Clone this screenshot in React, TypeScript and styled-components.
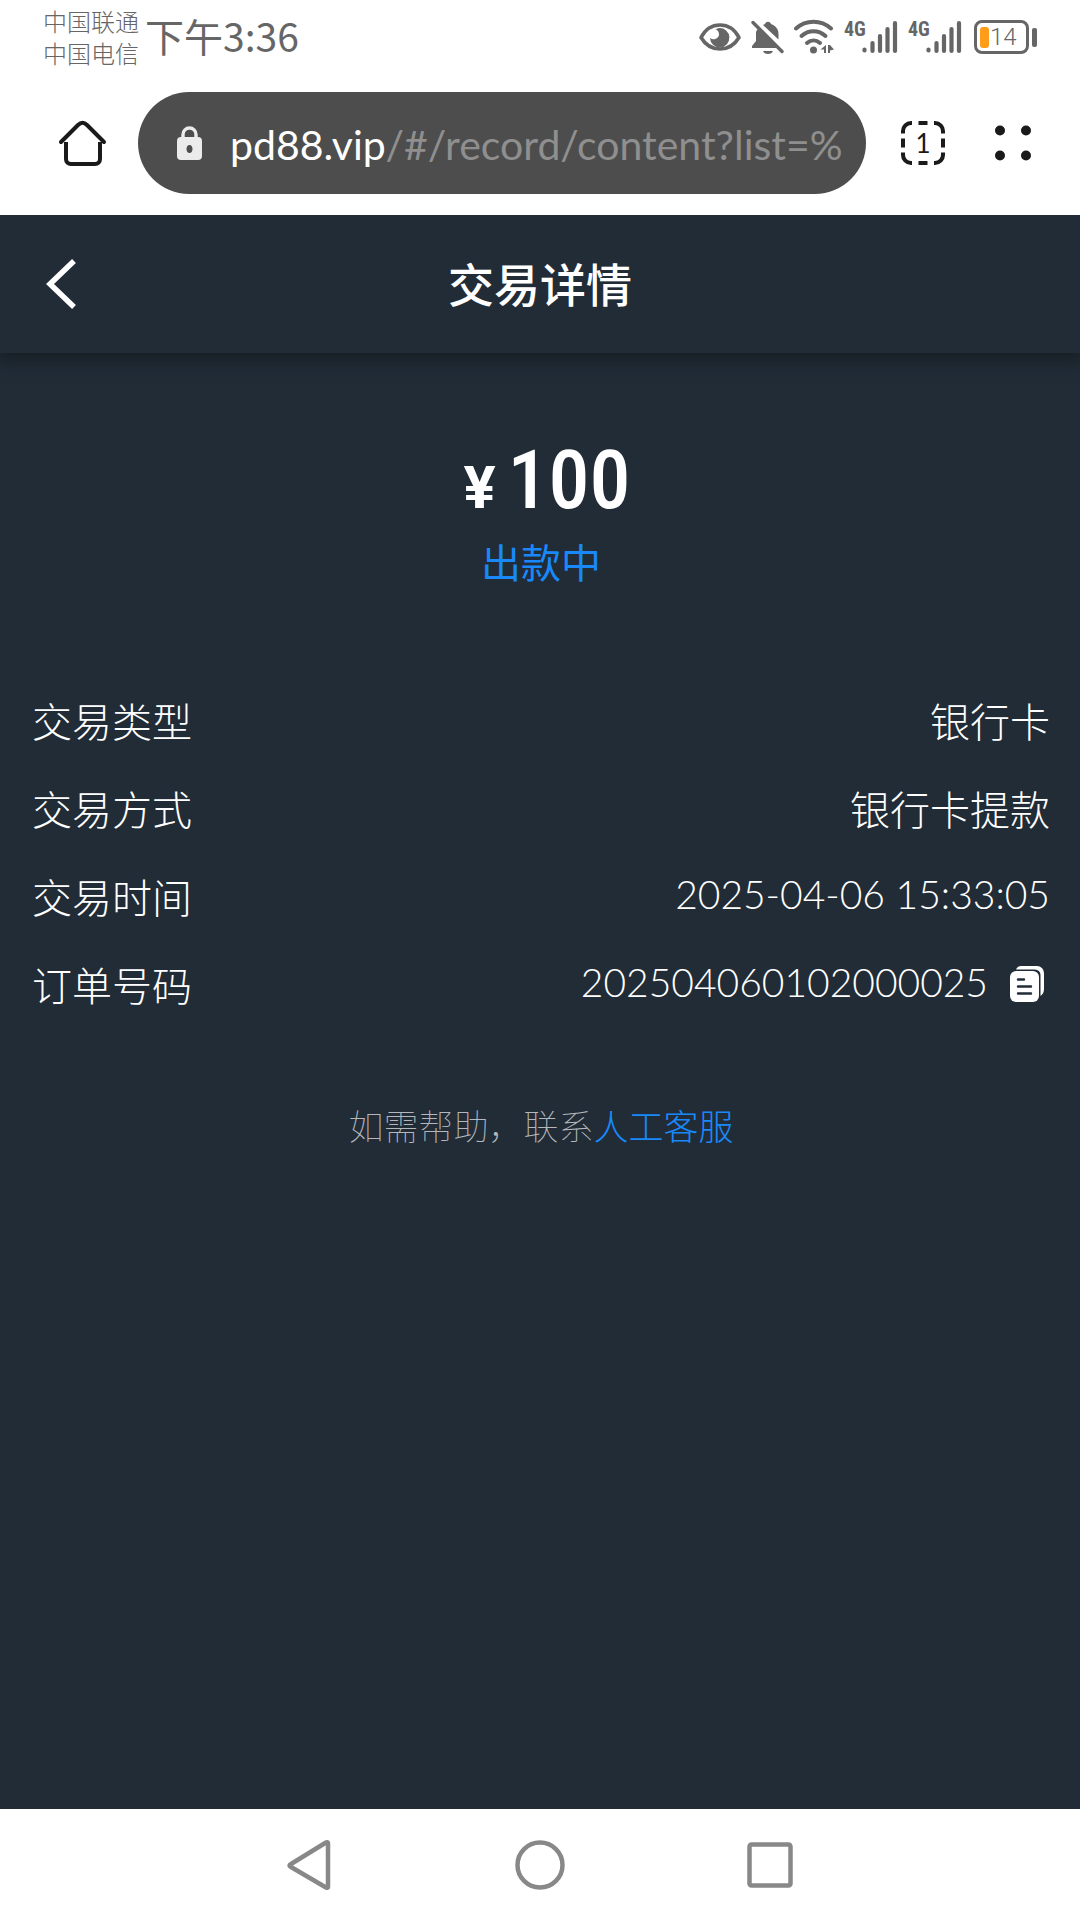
import React from "react";
import styled, { createGlobalStyle } from "styled-components";

const cjk = `"Noto Sans CJK SC", sans-serif`;
const condensed = `"Roboto Condensed", Roboto, sans-serif`;

const GlobalStyle = createGlobalStyle`
  * { box-sizing: border-box; }
  html, body { margin: 0; padding: 0; background: #212c37; }
  body { font-family: ${cjk}; }
  button { margin: 0; padding: 0; border: 0; background: none; color: inherit; font: inherit; cursor: pointer; }
  svg { display: block; flex: none; }
`;

const Screen = styled.div`
  display: flex;
  flex-direction: column;
  min-height: 100vh;
`;

const StatusBar = styled.div`
  display: flex;
  align-items: center;
  justify-content: space-between;
  height: 74px;
  padding: 0 43px;
  background: #fff;
  color: #666;
`;

const StatusGroup = styled.div`
  display: flex;
  align-items: center;
  gap: 10px;
`;

const Carriers = styled.div`
  display: flex;
  flex-direction: column;
  font-size: 24px;
  line-height: 32px;
  font-weight: 300;
`;

const Clock = styled.time`
  padding-bottom: 4px;
  font-size: 39px;
  line-height: 48px;
`;

const ClockGroup = styled(StatusGroup)`
  gap: 6px;
`;

const SignalBox = styled.div`
  display: flex;
  align-items: flex-start;
  width: 54px;
`;

const NetworkLabel = styled.span`
  width: 18px;
  font: bold 20px/18px ${condensed};
`;

const Battery = styled.div`
  display: flex;
  align-items: center;
  gap: 3px;
  padding-left: 2px;
`;

const BatteryBody = styled.div`
  display: flex;
  align-items: center;
  gap: 1px;
  width: 55px;
  height: 34px;
  padding-left: 3px;
  border: 3px solid #666;
  border-radius: 8px;
  font: 300 24px/28px Roboto, sans-serif;
`;

const BatteryLevel = styled.span`
  width: 9px;
  height: 21px;
  border-radius: 3px;
  background: #ff9c1a;
`;

const BatteryTip = styled.span`
  width: 5px;
  height: 19px;
  border-radius: 2px;
  background: #666;
`;

const BrowserBar = styled.div`
  position: relative;
  z-index: 2;
  display: flex;
  align-items: center;
  height: 141px;
  padding: 0 42px 3px 56px;
  background: #fff;
  color: #1a1a1a;
`;

const Address = styled.button`
  && {
    display: flex;
    flex: 1;
    align-items: center;
    gap: 27px;
    min-width: 0;
    height: 102px;
    margin: 0 32px 0 28px;
    padding: 0 18px 0 38px;
    border-radius: 51px;
    background: #4d4d4d;
    text-align: left;
  }
`;

const Url = styled.span`
  flex: 1;
  min-width: 0;
  padding-top: 4px;
  overflow: hidden;
  white-space: nowrap;
  font: 41px/56px Lato, sans-serif;
  color: #8f8f8f;
`;

const Host = styled.span`
  color: #fff;
`;

const TabsButton = styled.button`
  && {
    display: grid;
    place-items: center;
    width: 50px;
    height: 50px;
    margin-right: 40px;
    font: 26px/32px Lato, sans-serif;
  }
  > * { grid-area: 1 / 1; }
`;

const PageHeader = styled.header`
  display: grid;
  grid-template-columns: 120px 1fr 120px;
  align-items: center;
  height: 138px;
  background: #212c37;
  box-shadow: 0 6px 16px 2px rgba(20, 26, 28, 0.7);
  z-index: 1;
`;

const BackButton = styled.button`
  && {
    display: flex;
    height: 100%;
    align-items: center;
    padding-left: 44px;
    color: #fff;
  }
`;

const Title = styled.h1`
  margin: 0;
  padding-bottom: 4px;
  text-align: center;
  color: #fff;
  font: 500 46px/64px ${cjk};
`;

const Content = styled.main`
  flex: 1;
  padding: 83px 30px 0 32px;
  background: #212c37;
  color: #fff;
`;

const Summary = styled.section`
  display: flex;
  flex-direction: column;
  align-items: center;
`;

const Amount = styled.div`
  display: flex;
  align-items: baseline;
  gap: 12px;
  padding-left: 12px;
  font: 500 82px/88px ${condensed};
`;

const Currency = styled.span`
  font: bold 60px/60px Roboto, sans-serif;
`;

const State = styled.p`
  margin: 9px 0 0;
  font-size: 40px;
  line-height: 56px;
  color: #1989fa;
`;

const Details = styled.dl`
  margin: 87px 0 0;
  font-size: 40px;
  line-height: 56px;
  font-weight: 300;
`;

const DetailRow = styled.div`
  display: flex;
  align-items: center;
  justify-content: space-between;
  height: 88px;
`;

const Label = styled.dt`
  margin: 0;
`;

const Value = styled.dd`
  display: flex;
  align-items: center;
  gap: 16px;
  margin: 0;
`;

const Digits = styled.span`
  padding-bottom: 4px;
  font: 300 39px/56px Lato, sans-serif;
`;

const CopyButton = styled.button`
  && {
    padding: 0 6px;
  }
`;

const Help = styled.p`
  margin: 71px 0 0;
  text-align: center;
  font-size: 35px;
  line-height: 52px;
  font-weight: 100;
  color: #b4b8bc;
`;

const HelpLink = styled.a`
  color: #1989fa;
  font-weight: 300;
  text-decoration: none;
`;

const NavBar = styled.nav`
  display: flex;
  height: 111px;
  padding: 0 18%;
  background: #fff;
  color: #888;
`;

const NavButton = styled.button`
  display: flex;
  flex: 1;
  align-items: center;
  justify-content: center;
`;

const EyeIcon = () => (
  <svg width="42" height="34" viewBox="0 0 42 34" fill="none">
    <path d="M2 17.500C6.500 9 13 5 21 5s14.500 4 19 12.500C35.500 25 29 29 21 29S6.500 25 2 17.500Z" stroke="#666" strokeWidth="3.600" strokeLinejoin="round" />
    <path d="M20 8a9.700 9.700 0 1 1-9 10c4 3 9 0 9-3.500 0-3-2-5.500-4-5Z" fill="#666" />
  </svg>
);

const MutedIcon = () => (
  <svg width="33" height="36" viewBox="0 0 33 36">
    <path d="M7 10 27 29H1v-2l4-5V14c0-1.500.800-3 2-4ZM12 6l2-1c1-3 5-3 6 0 5 2 7.500 5 7.500 10v5.500ZM12 32h10c-1 4-9 4-10 0Z" fill="#666" />
    <path d="M2 3.500 31 32.500" stroke="#666" strokeWidth="3.400" strokeLinecap="round" />
  </svg>
);

const WifiIcon = () => (
  <svg width="40" height="36" viewBox="0 0 40 36" fill="none">
    <g stroke="#666" strokeWidth="4" strokeLinecap="round">
      <path d="M2 9.500c10-9 25-9 35 0" />
      <path d="M7.500 17c7-6.500 17-6.500 24 0" />
      <path d="M13 24c4-3.500 9-3.500 13 0" />
    </g>
    <circle cx="19.500" cy="31" r="3.500" fill="#666" />
    <path d="M26.500 30.500 32 26v8h-2v-3.500ZM34 26h2l4 4.500-4 1V34h-2Z" fill="#666" />
  </svg>
);

const SignalBars = () => (
  <svg width="36" height="34" viewBox="0 0 36 34" stroke="#666" strokeWidth="4.200" strokeLinecap="round">
    <path d="M2.500 29.500v1M10.500 23v8M18 16v15M25.500 9v22M33 3v28" />
  </svg>
);

const Signal = () => (
  <SignalBox>
    <NetworkLabel>4G</NetworkLabel>
    <SignalBars />
  </SignalBox>
);

const HomeIcon = () => (
  <svg width="54" height="54" viewBox="0 0 54 54" fill="none" stroke="currentColor" strokeWidth="4" strokeLinecap="round">
    <path d="M5 26 22 9c3-3 6-3 9 0l17 17" />
    <path d="M10 26v17c0 3 2 5 5 5h24c3 0 5-2 5-5V26" strokeLinecap="butt" />
  </svg>
);

const LockIcon = () => (
  <svg width="27" height="36" viewBox="0 0 27 36">
    <path d="M7 14V9.500a6.500 6.500 0 0 1 13 0V14" fill="none" stroke="#ebebeb" strokeWidth="3.400" />
    <path fillRule="evenodd" d="M5 12h17a4 4 0 0 1 4 4v15a4 4 0 0 1-4 4H5a4 4 0 0 1-4-4V16a4 4 0 0 1 4-4Zm8.500 8c-4 0-4 8 0 8s4-8 0-8Z" fill="#ebebeb" />
  </svg>
);

const TabsFrame = () => (
  <svg width="46" height="48" viewBox="0 0 46 48" fill="none" stroke="currentColor" strokeWidth="4">
    <path d="M3 14.500V12a8 8 0 0 1 8-8h1M34 4h1a8 8 0 0 1 8 8v2.500M43 33.500V36a8 8 0 0 1-8 8h-1M12 44h-1a8 8 0 0 1-8-8v-2.500M18.500 4h9M18.500 44h9M3 19.500v9M43 19.500v9" />
  </svg>
);

const MenuIcon = () => (
  <svg width="50" height="50" viewBox="0 0 50 50" fill="currentColor">
    <circle cx="12" cy="12.500" r="5" />
    <circle cx="38" cy="12.500" r="5" />
    <circle cx="12" cy="37.500" r="5" />
    <circle cx="38" cy="37.500" r="5" />
  </svg>
);

const BackIcon = () => (
  <svg width="34" height="52" viewBox="0 0 34 52" fill="none" stroke="currentColor" strokeWidth="5.500">
    <path d="M30 3 6 26l24 23" />
  </svg>
);

const CopyIcon = () => (
  <svg width="34" height="36" viewBox="0 0 34 36">
    <path d="M6 3.500C7 1 9 0 11 0h16a7 7 0 0 1 7 7v16c0 3-1 5-3.500 7V9a5.500 5.500 0 0 0-5.500-5.500Z" fill="#fff" />
    <rect y="5" width="29" height="31" rx="6" fill="#fff" />
    <path d="M8 13.500h6M8 20.500h13M8 27.500h13" stroke="#212c37" strokeWidth="2.400" strokeLinecap="round" />
  </svg>
);

const details: { label: string; value: string; numeric?: boolean; copy?: boolean }[] = [
  { label: "交易类型", value: "银行卡" },
  { label: "交易方式", value: "银行卡提款" },
  { label: "交易时间", value: "2025-04-06 15:33:05", numeric: true },
  { label: "订单号码", value: "202504060102000025", numeric: true, copy: true },
];

export default function App() {
  return (
    <Screen>
      <GlobalStyle />
      <StatusBar>
        <ClockGroup>
          <Carriers>
            <span>中国联通</span>
            <span>中国电信</span>
          </Carriers>
          <Clock>下午3:36</Clock>
        </ClockGroup>
        <StatusGroup>
          <EyeIcon />
          <MutedIcon />
          <WifiIcon />
          <Signal />
          <Signal />
          <Battery>
            <BatteryBody>
              <BatteryLevel />
              14
            </BatteryBody>
            <BatteryTip />
          </Battery>
        </StatusGroup>
      </StatusBar>

      <BrowserBar>
        <button aria-label="主页"><HomeIcon /></button>
        <Address>
          <LockIcon />
          <Url><Host>pd88.vip</Host>/#/record/content?list=%</Url>
        </Address>
        <TabsButton>
          <TabsFrame />
          <span>1</span>
        </TabsButton>
        <button aria-label="菜单"><MenuIcon /></button>
      </BrowserBar>

      <PageHeader>
        <BackButton aria-label="返回"><BackIcon /></BackButton>
        <Title>交易详情</Title>
      </PageHeader>

      <Content>
        <Summary>
          <Amount><Currency>¥</Currency>100</Amount>
          <State>出款中</State>
        </Summary>
        <Details>
          {details.map((row) => (
            <DetailRow key={row.label}>
              <Label>{row.label}</Label>
              <Value>
                {row.numeric ? <Digits>{row.value}</Digits> : row.value}
                {row.copy && <CopyButton aria-label="复制"><CopyIcon /></CopyButton>}
              </Value>
            </DetailRow>
          ))}
        </Details>
        <Help>如需帮助，联系<HelpLink href="#service">人工客服</HelpLink></Help>
      </Content>

      <NavBar>
        <NavButton aria-label="后退">
          <svg width="46" height="52" viewBox="0 0 46 52" fill="none" stroke="currentColor" strokeWidth="4.500" strokeLinejoin="round">
            <path d="M41 4v44c0 1-1 1-2 .500L4 28c-2-1-2-2 0-3L39 3.500c1-.500 2-.500 2 .500Z" />
          </svg>
        </NavButton>
        <NavButton aria-label="主屏幕">
          <svg width="52" height="52" viewBox="0 0 52 52" fill="none" stroke="currentColor" strokeWidth="4.500">
            <circle cx="26" cy="26" r="22.500" />
          </svg>
        </NavButton>
        <NavButton aria-label="最近任务">
          <svg width="46" height="46" viewBox="0 0 46 46" fill="none" stroke="currentColor" strokeWidth="4.500">
            <rect x="2.500" y="2.500" width="41" height="41" rx="2" />
          </svg>
        </NavButton>
      </NavBar>
    </Screen>
  );
}
